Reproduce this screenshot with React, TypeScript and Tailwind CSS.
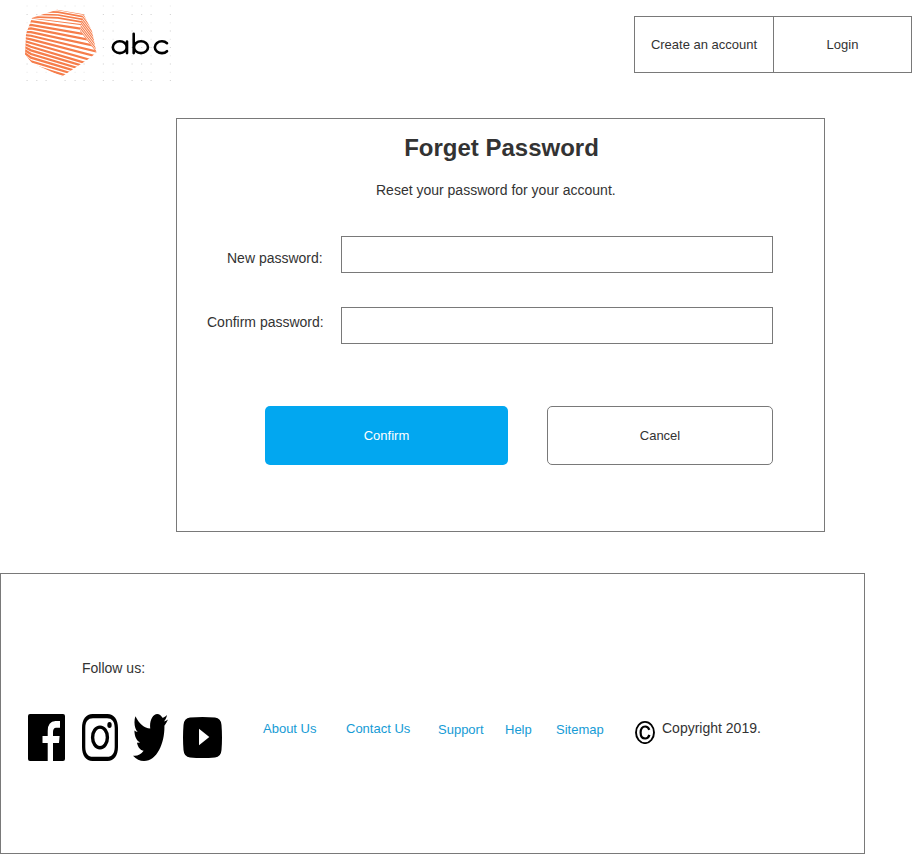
const ink = "text-[#333333]";

const dotRows = [6, 14.5, 22.8, 31, 39.3, 47.5, 55.8, 64, 72.3, 80.5];
const dotCols = [27, 36.7, 46, 65, 75, 84, 103.3, 113, 132, 141.5, 151, 170.3];

const frontStripes = Array.from({ length: 17 }, (_, k) => {
  const y = 17.5 + k * 3.65;
  const slope = Math.min(0.3, 0.13 + k * 0.022);
  const lift = Math.max(-1.5, Math.min(6, (k - 4) * 0.8));
  return `M23 ${y - lift}L31 ${y}L100 ${y + slope * 69}`;
});

const topStripes = [-5.6, -2.8, 0, 2.8].map((y) => `M28 ${y + 14}L58 ${y + 15}L86 ${y + 20}`);

const sideStripes = Array.from({ length: 13 }, (_, k) => `M78 ${-1 + k * 2.9}L98 ${25 + k * 2.9}`);

function Logo() {
  return (
    <svg width="190" height="90" viewBox="0 0 190 90" className="block">
      <clipPath id="front">
        <path d="M32 18 81 24 80 31 96.500 52.500 90 58 62 76.500 32 63 25 54.500 26 34Z" />
      </clipPath>
      <clipPath id="top">
        <path d="M33 17.500 57 9.800 83.500 14.300 81 24 32 18Z" />
      </clipPath>
      <clipPath id="side">
        <path d="M83.500 14 92 31 96.500 52.500 80 31 81 22Z" />
      </clipPath>
      {dotRows.map((y, r) =>
        dotCols.map((x, c) => (
          <rect key={`${r}-${c}`} x={x - 0.5} y={y - 0.5} width="1.2" height="1" fill="#999" opacity={r % 2 === 1 ? 0.4 : 0.2} />
        )),
      )}
      <path d="M33 17.500 57 9.800 83 14.300 92 31 96.500 52 90 58 62 76.500 32 63 25 54.500 26 34Z" fill="#fff" />
      <g fill="none" stroke="#f67d4b">
        <path clipPath="url(#front)" strokeWidth="2.200" d={frontStripes.join("")} />
        <path clipPath="url(#top)" strokeWidth="1.700" d={topStripes.join("")} />
        <path clipPath="url(#side)" strokeWidth="1.100" d={sideStripes.join("")} />
      </g>
      <g fill="none" stroke="#000" strokeWidth="2.600" strokeLinecap="round">
        <ellipse cx="119.800" cy="47.200" rx="7" ry="5.900" />
        <path d="M127 41.500v11.600" />
        <path d="M133.700 33.800v19.300" />
        <ellipse cx="141" cy="47.200" rx="7" ry="5.900" />
        <path d="M167 43.200a7 5.900 0 1 0 0 8" />
      </g>
    </svg>
  );
}

function Facebook() {
  return (
    <svg width="37" height="47" viewBox="0 0 37 47" className="mt-px block">
      <path fill="#000" fillRule="evenodd" d="M2 0H35Q37 0 37 2V45Q37 47 35 47H25V29H31L31.600 22H25V18Q25 14 28 13.800H32V7H27.500Q19.700 7.300 19.700 17V22H14.500V29H19.700V47H2Q0 47 0 45V2Q0 0 2 0Z" />
    </svg>
  );
}

function Instagram() {
  return (
    <svg width="36" height="47" viewBox="0 0 36 47" className="mt-px block">
      <path
        fill="#000"
        fillRule="evenodd"
        d="M10.500 0H25.500C32 0 36 5.500 36 14V33C36 41.500 32 47 25.500 47H10.500C4 47 0 41.500 0 33V14C0 5.500 4 0 10.500 0ZM11 4.200C6 4.200 3.300 7.500 3.300 14V33C3.300 39.500 6 42.800 11 42.800H25C30 42.800 32.700 39.500 32.700 33V14C32.700 7.500 30 4.200 25 4.200Z"
      />
      <ellipse cx="18" cy="23.400" rx="7.400" ry="10.300" fill="none" stroke="#000" strokeWidth="3.400" />
      <ellipse cx="27.500" cy="11" rx="2.200" ry="2.900" fill="#000" />
    </svg>
  );
}

function Twitter() {
  return (
    <svg width="35" height="47" viewBox="0 48 512 416" preserveAspectRatio="none" className="mt-px block">
      <path fill="#000" d="M459.37 151.716c.325 4.548.325 9.097.325 13.645 0 138.72-105.583 298.558-298.558 298.558-59.452 0-114.68-17.219-161.137-47.106 8.447.974 16.568 1.299 25.34 1.299 49.055 0 94.213-16.568 130.274-44.832-46.132-.975-84.792-31.188-98.112-72.772 6.498.974 12.995 1.624 19.818 1.624 9.421 0 18.843-1.3 27.614-3.573-48.081-9.747-84.143-51.98-84.143-102.985v-1.299c13.969 7.797 30.214 12.67 47.431 13.319-28.264-18.843-46.781-51.005-46.781-87.391 0-19.492 5.197-37.36 14.294-52.954 51.655 63.675 129.3 105.258 216.365 109.807-1.624-7.797-2.599-15.918-2.599-24.04 0-57.828 46.782-104.934 104.934-104.934 30.213 0 57.502 12.67 76.67 33.137 23.715-4.548 46.456-13.32 66.599-25.34-7.798 24.366-24.366 44.833-46.132 57.827 21.117-2.273 41.584-8.122 60.426-16.243-14.292 20.791-32.161 39.308-52.628 54.253z" />
    </svg>
  );
}

function Youtube() {
  return (
    <svg width="39" height="41" viewBox="0 0 39 41" className="mt-1 block">
      <path fill="#000" d="M7 .5Q19.500-.5 32 .5 38 1 38.500 8 39.500 20.500 38.500 33 38 40 32 40.500 19.500 41.500 7 40.500 1 40 .5 33-.5 20.500.5 8 1 1 7 .5Z" />
      <path fill="#fff" d="M16 11.800 26.300 20 16 28.300Z" />
    </svg>
  );
}

function CopyrightMark() {
  return (
    <svg width="20" height="24" viewBox="0 0 20 24" className="ml-[31px] mt-[7px] block shrink-0">
      <ellipse cx="10" cy="12.500" rx="9" ry="10.600" fill="none" stroke="#000" strokeWidth="1.900" />
      <path d="M14.300 9.800C13.500 7.500 12 6.500 10.200 6.500 7.300 6.500 5.600 9 5.600 12.500S7.300 18.500 10.200 18.500C12.200 18.500 13.700 17.200 14.400 14.900" fill="none" stroke="#000" strokeWidth="2.200" />
    </svg>
  );
}

export default function App() {
  return (
    <div className={`h-[854px] w-[912px] overflow-hidden bg-white font-['Liberation_Sans',Arial,sans-serif] text-sm leading-4 ${ink}`}>
      <header className="flex h-[118px] justify-between">
        <Logo />
        <nav className="mt-4 flex h-[57px] w-[278px] border border-[#797979] text-[13px]">
          <a className="flex w-[139px] items-center justify-center border-r border-[#797979]">Create an account</a>
          <a className="flex flex-1 items-center justify-center">Login</a>
        </nav>
      </header>

      <main className="ml-44 h-[414px] w-[649px] border border-[#797979]">
        <h1 className="mt-[15px] pl-0.5 text-center text-2xl leading-7 font-bold">Forget Password</h1>
        <p className="mt-5 ml-[199px]">Reset your password for your account.</p>
        <div className="mt-[38px] flex">
          <label className="mt-[14px] ml-[50px] w-[114px]">New password:</label>
          <input className="h-[37px] w-[432px] border border-[#797979]" />
        </div>
        <div className="mt-[34px] flex">
          <label className="mt-[7px] ml-[30px] w-[134px]">Confirm password:</label>
          <input className="h-[37px] w-[432px] border border-[#797979]" />
        </div>
        <div className="mt-[62px] ml-[88px] flex gap-[39px] text-[13px]">
          <button className="h-[59px] w-[243px] rounded-[5px] bg-[#02a7f0] text-white">Confirm</button>
          <button className="h-[59px] w-[226px] rounded-[5px] border border-[#797979]">Cancel</button>
        </div>
      </main>

      <footer className="mt-[41px] h-[281px] w-[865px] border border-[#797979]">
        <p className="mt-[86px] ml-[81px]">Follow us:</p>
        <div className="mt-[37px] flex items-start pl-[27px]">
          <div className="flex w-[235px] items-start">
            <Facebook />
            <div className="ml-[17px]"><Instagram /></div>
            <div className="ml-[15px]"><Twitter /></div>
            <div className="ml-[15px]"><Youtube /></div>
          </div>
          <nav className="mt-2 flex text-[13px] text-[#169bd5]">
            <a className="w-[83px]">About Us</a>
            <a className="w-[92px]">Contact Us</a>
            <a className="mt-px w-[67px]">Support</a>
            <a className="mt-px w-[51px]">Help</a>
            <a className="mt-px w-[48px]">Sitemap</a>
          </nav>
          <CopyrightMark />
          <p className="mt-[7px] ml-[7px] whitespace-nowrap">Copyright 2019.</p>
        </div>
      </footer>
    </div>
  );
}
